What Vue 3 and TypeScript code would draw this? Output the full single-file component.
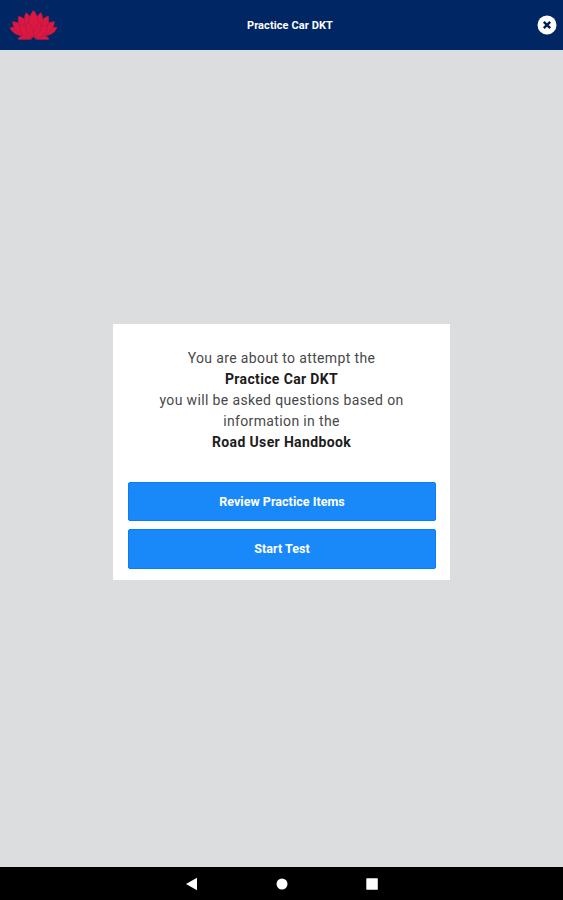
<script setup lang="ts">
const testName: string = 'Practice Car DKT'
const handbook: string = 'Road User Handbook'
const actions: string[] = ['Review Practice Items', 'Start Test']
</script>

<template>
  <div class="screen">
    <header class="bar">
      <svg class="logo" viewBox="0 0 50 32" aria-hidden="true">
        <g class="petals">
          <path d="M22 30.500 H9.500 C8.500 29 10 28 13 27 C6 26 2.500 22.500 .8 18.500 C7 17.500 15 19 19 24 Z" />
          <path d="M27 30.500 H39.500 C40.500 29 39 28 36 27 C43 26 46.500 22.500 48.200 18.500 C42 17.500 34 19 30 24 Z" />
          <path d="M21 28 C10 27 4 21 3.500 12.500 C11 13 20 18 21 28 Z" />
          <path d="M28 28 C39 27 45 21 45.500 12.500 C38 13 29 18 28 28 Z" />
          <path d="M22 27 C11 23 8 14 9.500 7 C17 9 23 17 22 27 Z" />
          <path d="M27 27 C38 23 41 14 39.500 7 C32 9 26 17 27 27 Z" />
          <path d="M24 26 C15 20 13.500 10 17 3.500 C23 8 26 16 24 26 Z" />
          <path d="M25 26 C34 20 35.500 10 32 3.500 C26 8 23 16 25 26 Z" />
          <path d="M24.500 27 C18 18 18.500 8 24.500 1.200 C30.500 8 31 18 24.500 27 Z" />
          <path d="M23 30 C14 28 10 23 10.500 16 C18 17 23 22 23 30 Z" />
          <path d="M26 30 C35 28 39 23 38.500 16 C31 17 26 22 26 30 Z" />
          <path d="M24 29 C17 24 15.500 18 18 13 C23 17 25.500 22 24 29 Z" />
          <path d="M25 29 C32 24 33.500 18 31 13 C26 17 23.500 22 25 29 Z" />
        </g>
      </svg>
      <h1 class="title">{{ testName }}</h1>
      <button class="close" aria-label="Close">
        <svg viewBox="0 0 20 20">
          <circle cx="10" cy="10" r="9.500" />
          <path d="M6.800 6.800 L13.200 13.200 M13.200 6.800 L6.800 13.200" />
        </svg>
      </button>
    </header>

    <main class="content">
      <section class="card">
        <p class="message">
          <span>You are about to attempt the</span><br />
          <b>{{ testName }}</b><br />
          you will be asked questions based on<br />
          information in the<br />
          <b>{{ handbook }}</b>
        </p>
        <div class="actions">
          <button v-for="label in actions" :key="label" class="action">{{ label }}</button>
        </div>
      </section>
    </main>

    <nav class="system">
      <svg viewBox="0 0 14 14"><path d="M1 7 L12 .8 V13.200 Z" /></svg>
      <svg viewBox="0 0 14 14"><circle cx="7" cy="7" r="5.500" /></svg>
      <svg viewBox="0 0 14 14"><rect x="1.300" y="1.300" width="11.500" height="11.500" rx=".6" /></svg>
    </nav>
  </div>
</template>

<style>
body {
  margin: 0;
}
</style>

<style scoped>
.screen {
  display: flex;
  flex-direction: column;
  height: 900px;
  background: #dcdddf;
  font-family: Roboto, "Liberation Sans", sans-serif;
}
.bar {
  display: grid;
  grid-template-columns: 50px 1fr 20px;
  align-items: center;
  box-sizing: border-box;
  height: 49.500px;
  padding: 0 6px 0 9px;
  background: #002664;
}
.logo {
  width: 50px;
  height: 32px;
}
.petals {
  fill: #dc1840;
  stroke: #a01c4c;
  stroke-width: 0.5;
}
.title {
  margin: 0;
  padding: 2px 16px 0 0;
  color: #fff;
  font-size: 11px;
  line-height: 16px;
  font-weight: 700;
  letter-spacing: 0.1px;
  text-align: center;
}
.close {
  width: 20px;
  height: 20px;
  padding: 0;
  border: 0;
  background: none;
}
.close svg {
  display: block;
}
.close circle {
  fill: #fff;
}
.close path {
  stroke: #002050;
  stroke-width: 2.4;
}
.content {
  flex: 1;
  display: flex;
  align-items: flex-start;
  justify-content: center;
  padding-top: 274px;
}
.card {
  box-sizing: border-box;
  width: 337px;
  height: 256.500px;
  padding: 24.500px 14px 0 15px;
  background: #fff;
}
.message {
  margin: 0 1px 0 0;
  color: #484848;
  font-size: 14px;
  line-height: 21px;
  letter-spacing: 0.36px;
  text-align: center;
}
.message b {
  color: #1c1c1c;
}
.actions {
  display: grid;
  gap: 8px;
  margin-top: 28.500px;
}
.action {
  height: 39.500px;
  padding: 0;
  border: 1px solid #0a7cf8;
  border-radius: 2px;
  background: #1989fa;
  color: #fff;
  font-family: inherit;
  font-size: 12.500px;
  font-weight: 700;
  letter-spacing: 0.04px;
}
.system {
  display: flex;
  align-items: center;
  justify-content: center;
  gap: 76px;
  height: 33px;
  background: #000;
}
.system svg {
  width: 14px;
  height: 14px;
  fill: #fff;
}
</style>
